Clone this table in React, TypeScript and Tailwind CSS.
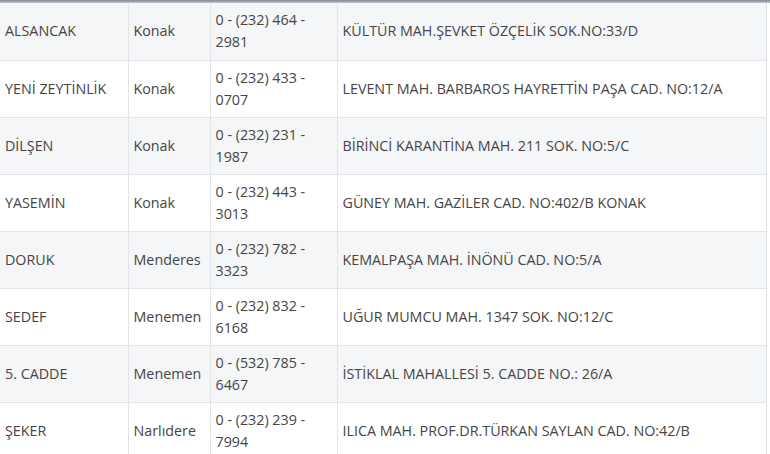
const rows = [
  ["ALSANCAK", "Konak", "0 - (232) 464 - 2981", "KÜLTÜR MAH.ŞEVKET ÖZÇELİK SOK.NO:33/D"],
  ["YENİ ZEYTİNLİK", "Konak", "0 - (232) 433 - 0707", "LEVENT MAH. BARBAROS HAYRETTİN PAŞA CAD. NO:12/A"],
  ["DİLŞEN", "Konak", "0 - (232) 231 - 1987", "BİRİNCİ KARANTİNA MAH. 211 SOK. NO:5/C"],
  ["YASEMİN", "Konak", "0 - (232) 443 - 3013", "GÜNEY MAH. GAZİLER CAD. NO:402/B KONAK"],
  ["DORUK", "Menderes", "0 - (232) 782 - 3323", "KEMALPAŞA MAH. İNÖNÜ CAD. NO:5/A"],
  ["SEDEF", "Menemen", "0 - (232) 832 - 6168", "UĞUR MUMCU MAH. 1347 SOK. NO:12/C"],
  ["5. CADDE", "Menemen", "0 - (532) 785 - 6467", "İSTİKLAL MAHALLESİ 5. CADDE NO.: 26/A"],
  ["ŞEKER", "Narlıdere", "0 - (232) 239 - 7994", "ILICA MAH. PROF.DR.TÜRKAN SAYLAN CAD. NO:42/B"],
];

export default function App() {
  return (
    <div className="w-[770px] h-[454px] overflow-hidden bg-white font-['Open_Sans',sans-serif] text-[14.3px] text-[#454545]">
      {/* koyu başlık şeridinin alt kenarı */}
      <div className="h-[3px] bg-gradient-to-b from-[#7d8693] to-[#c3c9d0]" />

      <div className="w-[767px] border-r border-[#dcdfe3]">
        <table className="w-full table-fixed border-collapse">
          <colgroup>
            <col className="w-[128px]" />
            <col className="w-[82px]" />
            <col className="w-[127px]" />
            <col />
          </colgroup>
          <tbody>
            {rows.map((row, i) => (
              <tr
                key={row[0]}
                className={`h-[57px] border-b border-[#e2e4e7] ${
                  i % 2 === 0 ? "bg-[#f5f6f8]" : "bg-white"
                }`}
              >
                {row.map((cell, j) => (
                  <td
                    key={j}
                    className={`px-[5px] py-[6px] leading-[22px] align-middle ${
                      j > 0 ? "border-l border-[#e2e4e7]" : ""
                    }`}
                  >
                    {cell}
                  </td>
                ))}
              </tr>
            ))}
          </tbody>
        </table>
      </div>
    </div>
  );
}
